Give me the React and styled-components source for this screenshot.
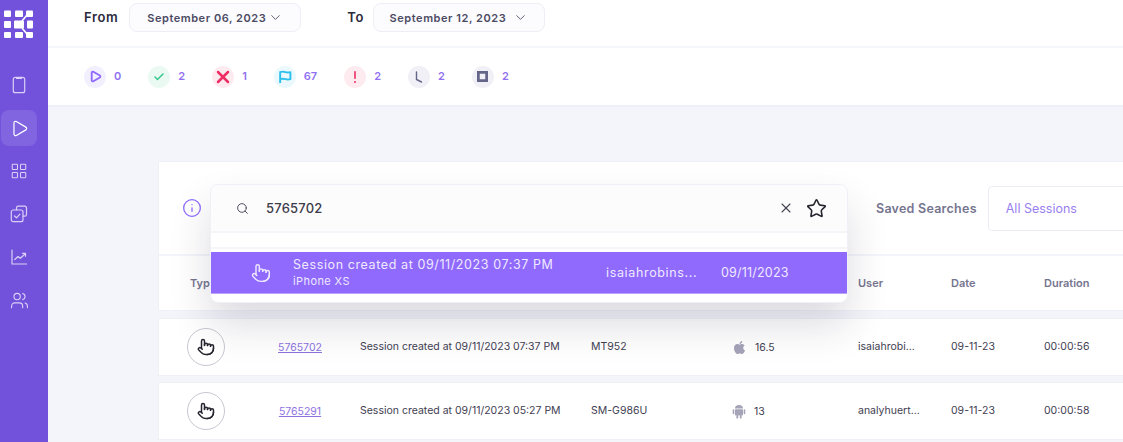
import React from 'react'
import styled, { createGlobalStyle } from 'styled-components'
import { Play, LayoutGrid, Users, Check, X, ChevronDown, Search, Star, Info, Pointer } from 'lucide-react'
import { FaApple } from 'react-icons/fa'

const GlobalStyle = createGlobalStyle`
  * {
    box-sizing: border-box;
  }
  html, body {
    margin: 0;
    width: 1123px;
    height: 442px;
    overflow: hidden;
    background: #f4f5fa;
    font-family: Inter, "Liberation Sans", sans-serif;
  }
`

const Page = styled.div`
  display: flex;
  width: 1123px;
  height: 442px;
  overflow: hidden;
`

const Sidebar = styled.nav`
  width: 48px;
  flex: none;
  background: #7352db;
  display: flex;
  flex-direction: column;
  align-items: flex-start;
  padding: 10px 0 0 1px;
`

const LogoBox = styled.div`
  width: 36px;
  height: 28px;
  padding-left: 3px;
  margin-bottom: 29px;
`

const NavList = styled.div`
  display: flex;
  flex-direction: column;
  gap: 7px;
`

const NavItem = styled.div`
  width: 36px;
  height: 36px;
  border-radius: 8px;
  display: flex;
  align-items: center;
  justify-content: center;
  color: ${({ $active }) => ($active ? '#fff' : '#d9cff7')};
  background: ${({ $active }) => ($active ? '#8064e0' : 'transparent')};
`

const Main = styled.main`
  flex: 1;
  min-width: 0;
  overflow: hidden;
`

const TopBar = styled.div`
  height: 48px;
  background: #fff;
  border-bottom: 2px solid #f5f6fa;
  display: flex;
  align-items: flex-start;
  padding: 3px 0 0 36px;
`

const DateLabel = styled.span`
  font-size: 13px;
  font-weight: 600;
  letter-spacing: 0.6px;
  color: #2b2b3c;
  line-height: 29px;
  margin-right: ${({ $gap }) => $gap}px;
`

const DateButton = styled.div`
  width: 172px;
  height: 29px;
  border: 1px solid #eeeff6;
  border-radius: 8px;
  background: #fcfcfe;
  display: flex;
  align-items: center;
  justify-content: center;
  gap: ${({ $gap }) => $gap}px;
  font-size: 11px;
  font-weight: 600;
  letter-spacing: 0.55px;
  color: #4b4a63;
  margin-right: 46px;
`

const StatusBar = styled.div`
  height: 59px;
  background: #fff;
  border-bottom: 2px solid #eeeff6;
  display: flex;
  align-items: center;
  padding-left: 36px;
  gap: 27px;
`

const Stat = styled.div`
  display: flex;
  align-items: center;
  gap: 8px;
`

const StatIcon = styled.span`
  width: 22px;
  height: 22px;
  border-radius: 50%;
  background: ${({ $bg }) => $bg};
  color: ${({ $fg }) => $fg};
  display: flex;
  align-items: center;
  justify-content: center;
`

const StatCount = styled.span`
  font-size: 11px;
  font-weight: 600;
  color: #9070f0;
  margin-top: -2px;
`

const Content = styled.div`
  padding: 54px 0 0 110px;
  width: 1120px;
`

const Panel = styled.section`
  position: relative;
  z-index: 2;
  background: #fff;
  border: 1px solid #f0f1f7;
  margin-bottom: 7px;
`

const PanelHead = styled.div`
  height: 94px;
  border-bottom: 2px solid #f4f5fa;
  display: flex;
  align-items: flex-start;
  padding: 24px 0 0 24px;
`

const InfoWrap = styled.span`
  color: #8f6afc;
  display: flex;
  margin: 12px 0 0 -1px;
`

const SavedLabel = styled.span`
  margin-left: 674px;
  font-size: 12.5px;
  font-weight: 600;
  letter-spacing: 0.25px;
  color: #76758f;
  line-height: 45px;
  white-space: nowrap;
`

const SavedSelect = styled.div`
  margin-left: 11px;
  width: 240px;
  height: 45px;
  border: 1px solid #ecedf4;
  border-radius: 4px;
  padding-left: 17px;
  font-size: 12.5px;
  color: #9a7ff0;
  line-height: 44px;
`

const columns = '91px 82px 231px 141px 126px 93px 93px 93px'

const HeadRow = styled.div`
  display: grid;
  grid-template-columns: ${columns};
  padding-left: 28px;
  height: 54px;
  align-items: center;
  font-size: 11px;
  font-weight: 600;
  color: #76758f;
`

const TypeHead = styled.span`
  margin-left: 3px;
`

const Row = styled.div`
  display: grid;
  grid-template-columns: ${columns};
  padding-left: 28px;
  margin-bottom: 6px;
  height: 58px;
  align-items: center;
  background: #fff;
  border: 1px solid #f0f1f7;
  font-size: 10.5px;
  color: #3f3e52;
`

const Cell = styled.span`
  margin-top: -2px;
`

const TypeCircle = styled.span`
  width: 38px;
  height: 38px;
  border: 1px solid #c9c8d2;
  border-radius: 50%;
  display: flex;
  align-items: center;
  justify-content: center;
  color: #26252f;
`

const SessionLink = styled.a`
  width: 44px;
  text-align: center;
  color: #8e72df;
  text-decoration: underline;
`

const OsCell = styled.span`
  display: flex;
  align-items: center;
  gap: 8px;
  color: #3f3e52;
  svg {
    color: #a4a3b8;
  }
`

const SearchBox = styled.div`
  position: absolute;
  left: 51px;
  top: 22px;
  width: 638px;
  height: 119px;
  border: 1px solid #f0f0f6;
  border-radius: 8px;
  background: #fff;
  box-shadow: 0 22px 40px rgba(40, 40, 70, 0.16);
  overflow: hidden;
`

const SearchInput = styled.div`
  height: 48px;
  background: #fcfcfd;
  border-bottom: 2px solid #f4f4f9;
  display: flex;
  align-items: center;
  padding: 0 20px 0 25px;
  color: #4b4a5c;
`

const SearchText = styled.span`
  flex: 1;
  margin-left: 17px;
  font-size: 13px;
  font-weight: 500;
  letter-spacing: 0.2px;
  color: #3c3b4a;
`

const ClearIcon = styled.span`
  display: flex;
  margin-right: 12px;
  color: #454454;
`

const Spacer = styled.div`
  height: 16px;
  border-bottom: 2px solid #f4f4f9;
  margin-bottom: 3px;
`

const Suggestion = styled.div`
  height: 42px;
  background: #8f6afc;
  border-bottom: 1px solid #b9a3fb;
  display: flex;
  align-items: center;
  color: #efe9ff;
  padding-left: 40px;
`

const SuggestionText = styled.div`
  margin-left: 22px;
  width: 313px;
  display: flex;
  flex-direction: column;
  gap: 2px;
`

const SuggestionTitle = styled.span`
  font-size: 12.5px;
  letter-spacing: 0.6px;
`

const SuggestionSub = styled.span`
  font-size: 11px;
  letter-spacing: 0.4px;
`

const SuggestionCell = styled.span`
  font-size: 12.5px;
  letter-spacing: ${({ $spacing }) => $spacing}px;
  width: ${({ $w }) => $w}px;
`

const Logo = () => (
  <svg width="30" height="28" viewBox="0 0 30 28" fill="#fff">
    <rect x="0" y="0.5" width="7" height="6.5" rx="1" />
    <rect x="11" y="0.5" width="8" height="6.5" rx="1" />
    <rect x="22" y="0.5" width="7" height="6.5" rx="1" />
    <rect x="0" y="11" width="7" height="7" rx="1" />
    <rect x="10" y="10.5" width="10" height="8" rx="1" />
    <rect x="23" y="10.5" width="6" height="8" rx="1" />
    <rect x="0" y="22" width="7" height="6" rx="1" />
    <rect x="11" y="22" width="8" height="6" rx="1" />
    <rect x="22" y="22" width="7" height="6" rx="1" />
    <path d="M18 11 L23 5 M18 18 L23 24" stroke="#fff" strokeWidth="1.6" fill="none" />
  </svg>
)

const ClipboardIcon = () => (
  <svg width="18" height="18" viewBox="0 0 18 18" fill="none" stroke="currentColor" strokeWidth="1.2" strokeLinejoin="round">
    <rect x="3.300" y="1.300" width="11.400" height="15.400" rx="2" />
    <path d="M6.500 1.300v1.200h5V1.300" />
  </svg>
)

const TasksIcon = () => (
  <svg width="18" height="18" viewBox="0 0 18 18" fill="none" stroke="currentColor" strokeWidth="1.200" strokeLinecap="round" strokeLinejoin="round">
    <path d="M6.500 4.800V3a1.800 1.800 0 0 1 1.800-1.800h6.400A1.800 1.800 0 0 1 16.500 3v6.400a1.800 1.800 0 0 1-1.800 1.800h-1.500" />
    <rect x="1.300" y="5" width="11.700" height="11.700" rx="2" />
    <path d="M4.500 11l2 1.800 3.400-3.600" />
  </svg>
)

const TrendIcon = () => (
  <svg width="18" height="18" viewBox="0 0 18 18" fill="none" stroke="currentColor" strokeWidth="1.200" strokeLinecap="round" strokeLinejoin="round">
    <path d="M2 2v14h14.500" />
    <path d="M4.800 11.500l3.200-3 2.300 1.800 5-4.600" />
    <path d="M12.500 5.300h3v3" />
  </svg>
)

const AndroidIcon = () => (
  <svg width="14" height="15" viewBox="0 0 14 15" fill="currentColor">
    <path d="M3 4.600a4 3.600 0 0 1 8 0z" />
    <rect x="3" y="5.200" width="8" height="6.300" rx="0.800" />
    <rect x="0.700" y="5.200" width="1.600" height="5" rx="0.800" />
    <rect x="11.700" y="5.200" width="1.600" height="5" rx="0.800" />
    <rect x="4.400" y="11" width="1.800" height="3.600" rx="0.900" />
    <rect x="7.800" y="11" width="1.800" height="3.600" rx="0.900" />
  </svg>
)

const FlagIcon = () => (
  <svg width="14" height="14" viewBox="0 0 13 13" fill="none" stroke="currentColor" strokeWidth="1.800" strokeLinejoin="round">
    <path d="M2 12V2c2-1 3.500-.5 5 0s3 .5 4.500 0v6.500c-1.500.5-3 .5-4.500 0s-3-.8-5 0" />
  </svg>
)

const BangIcon = () => (
  <svg width="12" height="14" viewBox="0 0 12 14" fill="currentColor">
    <rect x="5.200" y="1" width="1.600" height="8" rx="0.800" />
    <circle cx="6" cy="12" r="1" />
  </svg>
)

const ClockIcon = () => (
  <svg width="12" height="14" viewBox="0 0 12 14" fill="none" stroke="currentColor" strokeWidth="1.400" strokeLinecap="round">
    <path d="M3.500 2v7.500L8.500 12" />
  </svg>
)

const SquareIcon = () => (
  <svg width="11" height="11" viewBox="0 0 12 12" fill="none" stroke="currentColor" strokeWidth="3">
    <rect x="1.500" y="1.500" width="9" height="9" />
  </svg>
)

const stats = [
  { count: 0, bg: '#f2effe', fg: '#8f6afc', icon: <Play size={13} strokeWidth={3.4} /> },
  { count: 2, bg: '#ebf9f3', fg: '#35c98f', icon: <Check size={12} strokeWidth={3} /> },
  { count: 1, bg: '#fdebf0', fg: '#ee2f66', icon: <X size={20} strokeWidth={3} /> },
  { count: 67, bg: '#ebf8fd', fg: '#2cc0ec', icon: <FlagIcon /> },
  { count: 2, bg: '#fdebf0', fg: '#ee2f66', icon: <BangIcon /> },
  { count: 2, bg: '#f0f0f6', fg: '#65658a', icon: <ClockIcon /> },
  { count: 2, bg: '#f0f0f6', fg: '#65658a', icon: <SquareIcon /> },
]

const navItems = [
  { icon: <ClipboardIcon /> },
  { icon: <Play size={19} strokeWidth={1.5} />, active: true },
  { icon: <LayoutGrid size={18} strokeWidth={1.4} /> },
  { icon: <TasksIcon /> },
  { icon: <TrendIcon /> },
  { icon: <Users size={19} strokeWidth={1.4} /> },
]

const sessions = [
  { id: '5765702', title: 'Session created at 09/11/2023 07:37 PM', device: 'MT952', os: <FaApple size={15} />, version: '16.5', user: 'isaiahrobi...', date: '09-11-23', duration: '00:00:56' },
  { id: '5765291', title: 'Session created at 09/11/2023 05:27 PM', device: 'SM-G986U', os: <AndroidIcon />, version: '13', user: 'analyhuert...', date: '09-11-23', duration: '00:00:58' },
]

const App = () => (
  <Page>
    <GlobalStyle />
    <Sidebar>
      <LogoBox><Logo /></LogoBox>
      <NavList>
        {navItems.map((item, i) => (
          <NavItem key={i} $active={item.active}>{item.icon}</NavItem>
        ))}
      </NavList>
    </Sidebar>
    <Main>
      <TopBar>
        <DateLabel $gap={11}>From</DateLabel>
        <DateButton $gap={2}>September 06, 2023 <ChevronDown size={15} strokeWidth={1.4} /></DateButton>
        <DateLabel $gap={9}>To</DateLabel>
        <DateButton $gap={7}>September 12, 2023 <ChevronDown size={15} strokeWidth={1.4} /></DateButton>
      </TopBar>
      <StatusBar>
        {stats.map((s, i) => (
          <Stat key={i}>
            <StatIcon $bg={s.bg} $fg={s.fg}>{s.icon}</StatIcon>
            <StatCount>{s.count}</StatCount>
          </Stat>
        ))}
      </StatusBar>
      <Content>
        <Panel>
          <PanelHead>
            <InfoWrap><Info size={20} strokeWidth={1.6} /></InfoWrap>
            <SavedLabel>Saved Searches</SavedLabel>
            <SavedSelect>All Sessions</SavedSelect>
          </PanelHead>
          <HeadRow>
            <TypeHead>Type</TypeHead>
            <span />
            <span />
            <span />
            <span />
            <span>User</span>
            <span>Date</span>
            <span>Duration</span>
          </HeadRow>
          <SearchBox>
            <SearchInput>
              <Search size={13} strokeWidth={1.8} />
              <SearchText>5765702</SearchText>
              <ClearIcon><X size={16} strokeWidth={1.6} /></ClearIcon>
              <Star size={21} strokeWidth={1.8} color="#26252f" />
            </SearchInput>
            <Spacer />
            <Suggestion>
              <Pointer size={20} strokeWidth={1.7} />
              <SuggestionText>
                <SuggestionTitle>Session created at 09/11/2023 07:37 PM</SuggestionTitle>
                <SuggestionSub>iPhone XS</SuggestionSub>
              </SuggestionText>
              <SuggestionCell $w={115} $spacing={0.65}>isaiahrobins...</SuggestionCell>
              <SuggestionCell $w={80} $spacing={0.2}>09/11/2023</SuggestionCell>
            </Suggestion>
          </SearchBox>
        </Panel>
        {sessions.map(s => (
          <Row key={s.id}>
            <TypeCircle><Pointer size={18} strokeWidth={2} /></TypeCircle>
            <SessionLink>{s.id}</SessionLink>
            <Cell>{s.title}</Cell>
            <Cell>{s.device}</Cell>
            <OsCell>{s.os}{s.version}</OsCell>
            <Cell>{s.user}</Cell>
            <Cell>{s.date}</Cell>
            <Cell>{s.duration}</Cell>
          </Row>
        ))}
      </Content>
    </Main>
  </Page>
)

export default App
